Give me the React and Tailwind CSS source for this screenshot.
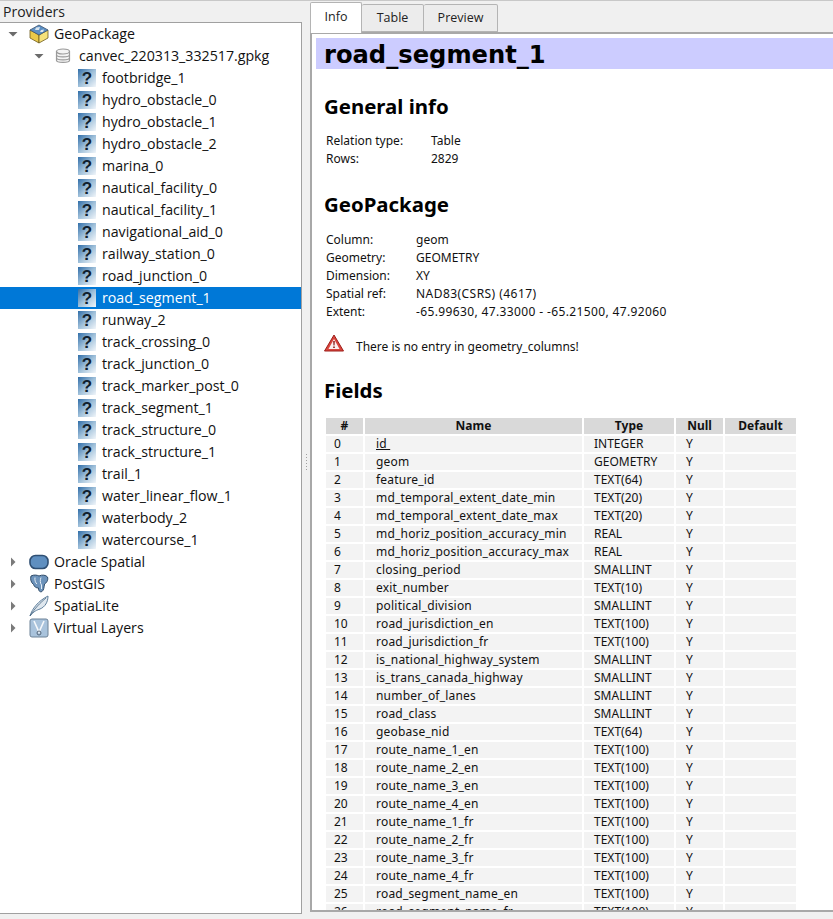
const layers = [
  "footbridge_1", "hydro_obstacle_0", "hydro_obstacle_1", "hydro_obstacle_2", "marina_0",
  "nautical_facility_0", "nautical_facility_1", "navigational_aid_0", "railway_station_0",
  "road_junction_0", "road_segment_1", "runway_2", "track_crossing_0", "track_junction_0",
  "track_marker_post_0", "track_segment_1", "track_structure_0", "track_structure_1",
  "trail_1", "water_linear_flow_1", "waterbody_2", "watercourse_1",
];

const fields = [
  ["id", "INTEGER"], ["geom", "GEOMETRY"], ["feature_id", "TEXT(64)"],
  ["md_temporal_extent_date_min", "TEXT(20)"], ["md_temporal_extent_date_max", "TEXT(20)"],
  ["md_horiz_position_accuracy_min", "REAL"], ["md_horiz_position_accuracy_max", "REAL"],
  ["closing_period", "SMALLINT"], ["exit_number", "TEXT(10)"], ["political_division", "SMALLINT"],
  ["road_jurisdiction_en", "TEXT(100)"], ["road_jurisdiction_fr", "TEXT(100)"],
  ["is_national_highway_system", "SMALLINT"], ["is_trans_canada_highway", "SMALLINT"],
  ["number_of_lanes", "SMALLINT"], ["road_class", "SMALLINT"], ["geobase_nid", "TEXT(64)"],
  ["route_name_1_en", "TEXT(100)"], ["route_name_2_en", "TEXT(100)"], ["route_name_3_en", "TEXT(100)"],
  ["route_name_4_en", "TEXT(100)"], ["route_name_1_fr", "TEXT(100)"], ["route_name_2_fr", "TEXT(100)"],
  ["route_name_3_fr", "TEXT(100)"], ["route_name_4_fr", "TEXT(100)"],
  ["road_segment_name_en", "TEXT(100)"], ["road_segment_name_fr", "TEXT(100)"],
];

function Arrow({ open }) {
  return open ? (
    <svg width="10" height="10" viewBox="0 0 10 10" className="shrink-0">
      <path d="M0.5 3 H9.5 L5 7.5 Z" fill="#6b6b6b" />
    </svg>
  ) : (
    <svg width="10" height="10" viewBox="0 0 10 10" className="shrink-0">
      <path d="M3 0.5 V9.5 L7.5 5 Z" fill="#7a7a7a" />
    </svg>
  );
}

function GeoPackageIcon() {
  return (
    <svg width="22" height="20" viewBox="0 0 22 20">
      <path d="M2 6 L11 11 V19 L2 14 Z" fill="#e9c94a" stroke="#6d5a1c" strokeWidth="0.8" />
      <path d="M20 6 L11 11 V19 L20 14 Z" fill="#f6e27a" stroke="#6d5a1c" strokeWidth="0.8" />
      <path d="M11 1 L20 6 L11 11 L2 6 Z" fill="#5b8fc4" stroke="#41566e" strokeWidth="0.8" />
      <path d="M8 3.5 L12 3 L11 6 L7 6 Z M13 6 L16 5.5 L15 8 L12 8 Z" fill="#d8e4ee" />
    </svg>
  );
}

function DbIcon() {
  return (
    <svg width="16" height="16" viewBox="0 0 16 16">
      <g fill="#f3f3f3" stroke="#9a9a9a" strokeWidth="1.2">
        <path d="M1.5 3.5 V12.5 C1.5 15 14.5 15 14.5 12.5 V3.5 Z" />
        <ellipse cx="8" cy="3.5" rx="6.5" ry="2.5" />
        <path d="M1.5 7 C1.5 9.5 14.5 9.5 14.5 7 M1.5 10 C1.5 12.5 14.5 12.5 14.5 10" fill="none" />
      </g>
    </svg>
  );
}

function QuestionIcon() {
  return (
    <span className="flex h-[18px] w-[18px] shrink-0 items-center justify-center bg-gradient-to-br from-[#2f6ea8] via-[#9fc0da] to-[#f2f6fa] font-['Liberation_Sans',sans-serif] text-[17px] font-bold leading-none text-[#10202e]">
      ?
    </span>
  );
}

function OracleIcon() {
  return (
    <svg width="20" height="16" viewBox="0 0 20 16">
      <rect x="1" y="1.5" width="18" height="13" rx="5.5" fill="#5f8fc0" stroke="#2f4f73" strokeWidth="1.6" />
    </svg>
  );
}

function PostgisIcon() {
  return (
    <svg width="20" height="20" viewBox="0 0 20 20">
      <path d="M2 2 C5 0.5 8 1 10 2 C13 0.5 17 1 18.5 3 C19.5 6 17.5 9 15.5 10 C15 13 15 16 13 17.5 C11 18.5 9.5 17 9.5 14 C7 14 5.5 13 4.5 10.5 C2 8.5 1 5 2 2 Z" fill="#6d93bb" stroke="#2e4a68" strokeWidth="1" />
      <path d="M6 3.5 C5.5 6 6.5 9 8 10 M12 3.5 C11 6 11 9 12.5 11 V15" fill="none" stroke="#e6eef5" strokeWidth="1" />
    </svg>
  );
}

function FeatherIcon() {
  return (
    <svg width="20" height="22" viewBox="0 0 20 22">
      <path d="M1 21 C3 14 9 6 19 1 C19 7 16 12 11 14 C8 15 5 16 1 21 Z" fill="#dfe7ee" stroke="#5f7f9c" strokeWidth="1" />
      <path d="M1 21 C6 13 11 8 17 3" fill="none" stroke="#41627f" strokeWidth="0.8" />
    </svg>
  );
}

function VirtualIcon() {
  return (
    <svg width="20" height="20" viewBox="0 0 20 20">
      <rect x="1" y="1" width="18" height="18" rx="2" fill="#a9c3dc" stroke="#6d8297" strokeWidth="1" />
      <path d="M5 3 L10 14 L15 3" fill="none" stroke="#f4f7fa" strokeWidth="1.6" />
      <circle cx="10" cy="15" r="2" fill="none" stroke="#56677a" strokeWidth="1" />
    </svg>
  );
}

function Provider({ icon, label }) {
  return (
    <div className="flex h-[22px] items-center pl-[8px]">
      <Arrow />
      <span className="ml-[10px] flex w-[22px] shrink-0 justify-center">{icon}</span>
      <span className="ml-[4px]">{label}</span>
    </div>
  );
}

function Tree() {
  return (
    <div className="min-h-0 flex-1 border border-l-0 border-[#a0a0a0] bg-white font-['Open_Sans',sans-serif] text-[14.2px] leading-none text-[#111]">
      <div className="flex h-[22px] items-center pl-[8px]">
        <Arrow open />
        <span className="ml-[10px] flex w-[22px] shrink-0 justify-center"><GeoPackageIcon /></span>
        <span className="ml-[4px]">GeoPackage</span>
      </div>
      <div className="flex h-[22px] items-center pl-[34px]">
        <Arrow open />
        <span className="ml-[11px]"><DbIcon /></span>
        <span className="ml-[8px]">canvec_220313_332517.gpkg</span>
      </div>
      {layers.map((name) => (
        <div
          key={name}
          className={
            name === "road_segment_1"
              ? "flex h-[22px] items-center bg-[#0078d7] pl-[78px] text-white"
              : "flex h-[22px] items-center pl-[78px]"
          }
        >
          <QuestionIcon />
          <span className="ml-[6px]">{name}</span>
        </div>
      ))}
      <Provider icon={<OracleIcon />} label="Oracle Spatial" />
      <Provider icon={<PostgisIcon />} label="PostGIS" />
      <Provider icon={<FeatherIcon />} label="SpatiaLite" />
      <Provider icon={<VirtualIcon />} label="Virtual Layers" />
    </div>
  );
}

function Heading({ children }) {
  return <h2 className="text-[20.4px] font-bold leading-none text-black">{children}</h2>;
}

function InfoRow({ label, value, labelWidth, valueClass }) {
  return (
    <div className="flex h-[18px] items-center">
      <span className={labelWidth}>{label}</span>
      <span className={valueClass}>{value}</span>
    </div>
  );
}

function WarningIcon() {
  return (
    <svg width="20" height="18" viewBox="0 0 20 18" className="-translate-y-[4px]">
      <path d="M10 1 L19.5 17 H0.5 Z" fill="#d9443c" stroke="#9c1f1a" strokeWidth="1" strokeLinejoin="round" />
      <path d="M10 5 L15.5 15 H4.5 Z" fill="#fbeeee" />
      <path d="M9.2 7 H10.8 L10.5 11.5 H9.5 Z M9.2 12.5 H10.8 V14 H9.2 Z" fill="#8a1612" />
    </svg>
  );
}

function FieldsTable() {
  return (
    <table className="ml-[12px] mt-[16px] w-[474px] table-fixed border-separate border-spacing-[2px] text-[12px] leading-none">
      <thead>
        <tr className="h-[16px] bg-[#d9d9d9] font-bold">
          <th className="w-[37px] font-bold">#</th>
          <th className="w-[217px] font-bold">Name</th>
          <th className="w-[90px] font-bold">Type</th>
          <th className="w-[47px] font-bold">Null</th>
          <th className="font-bold">Default</th>
        </tr>
      </thead>
      <tbody>
        {fields.map(([name, type], i) => (
          <tr key={name} className="h-[16px]">
            <td className="bg-[#f3f3f3] pl-[8px]">{i}</td>
            <td className="bg-[#f3f3f3] pl-[11px] tracking-[0.2px]">
              {name === "id" ? <span className="underline">id&nbsp;</span> : name}
            </td>
            <td className="bg-[#f3f3f3] pl-[10px]">{type}</td>
            <td className="bg-[#f3f3f3] pl-[10px]">Y</td>
            <td className="bg-[#f3f3f3]"></td>
          </tr>
        ))}
      </tbody>
    </table>
  );
}

export default function App() {
  return (
    <div className="flex h-[919px] w-[833px] overflow-hidden border-t border-[#c8c8c8] bg-[#f0f0f0] font-['Noto_Sans',sans-serif]">
      <div className="flex h-[913px] w-[302px] shrink-0 flex-col">
        <div className="flex h-[21px] items-end pb-[1px] pl-[3px] font-['Open_Sans',sans-serif] text-[14px] leading-[18px] text-[#222]">
          Providers
        </div>
        <Tree />
      </div>

      <div className="flex w-[8px] shrink-0 flex-col items-center justify-center gap-[2px] pt-[4px]">
        {[0, 1, 2, 3, 4, 5].map((d) => (
          <span key={d} className="h-[1px] w-[1px] bg-[#a0a0a0]" />
        ))}
      </div>

      <div className="flex h-[911px] min-w-0 flex-1 flex-col">
        <div className="relative z-10 flex h-[31px] items-end font-['Open_Sans',sans-serif] text-[12.5px] text-[#222]">
          <div className="flex h-[31px] w-[52px] -mb-[1px] items-center justify-center rounded-t-[2px] border border-b-0 border-[#b4b4b4] bg-white pb-[2px]">
            Info
          </div>
          <div className="flex h-[28px] w-[62px] items-center justify-center rounded-t-[2px] border border-l-0 border-[#b4b4b4] bg-[#ececec]">
            Table
          </div>
          <div className="flex h-[28px] w-[74px] items-center justify-center rounded-t-[2px] border border-l-0 border-[#b4b4b4] bg-[#ececec]">
            Preview
          </div>
        </div>

        <div className="min-h-0 flex-1 overflow-hidden border-2 border-r-0 border-[#a8a8a8] bg-white pt-[4px] text-[12px] leading-none text-[#111]">
          <div className="ml-[4px] h-[31px] bg-[#ccccff] pl-[8px] font-['DejaVu_Sans',sans-serif] text-[24.2px] font-bold leading-[34px] text-black">
            road_segment_1
          </div>

          <div className="mt-[27px] pl-[12px]">
            <Heading>General info</Heading>
          </div>
          <div className="mt-[16px] pl-[14px]">
            <InfoRow label="Relation type:" value="Table" labelWidth="w-[105px]" />
            <InfoRow label="Rows:" value="2829" labelWidth="w-[105px]" />
          </div>

          <div className="mt-[26px] pl-[12px]">
            <Heading>GeoPackage</Heading>
          </div>
          <div className="mt-[16px] pl-[14px]">
            <InfoRow label="Column:" value="geom" labelWidth="w-[90px]" />
            <InfoRow label="Geometry:" value="GEOMETRY" labelWidth="w-[90px]" />
            <InfoRow label="Dimension:" value="XY" labelWidth="w-[90px]" />
            <InfoRow label="Spatial ref:" value="NAD83(CSRS) (4617)" labelWidth="w-[90px]" valueClass="tracking-[0.45px]" />
            <InfoRow label="Extent:" value="-65.99630, 47.33000 - -65.21500, 47.92060" labelWidth="w-[90px]" valueClass="tracking-[0.37px]" />
          </div>

          <div className="mt-[17px] flex items-center pl-[12px]">
            <WarningIcon />
            <span className="ml-[12px]">There is no entry in geometry_columns!</span>
          </div>

          <div className="mt-[24px] pl-[12px]">
            <Heading>Fields</Heading>
          </div>
          <FieldsTable />
        </div>
      </div>
    </div>
  );
}
